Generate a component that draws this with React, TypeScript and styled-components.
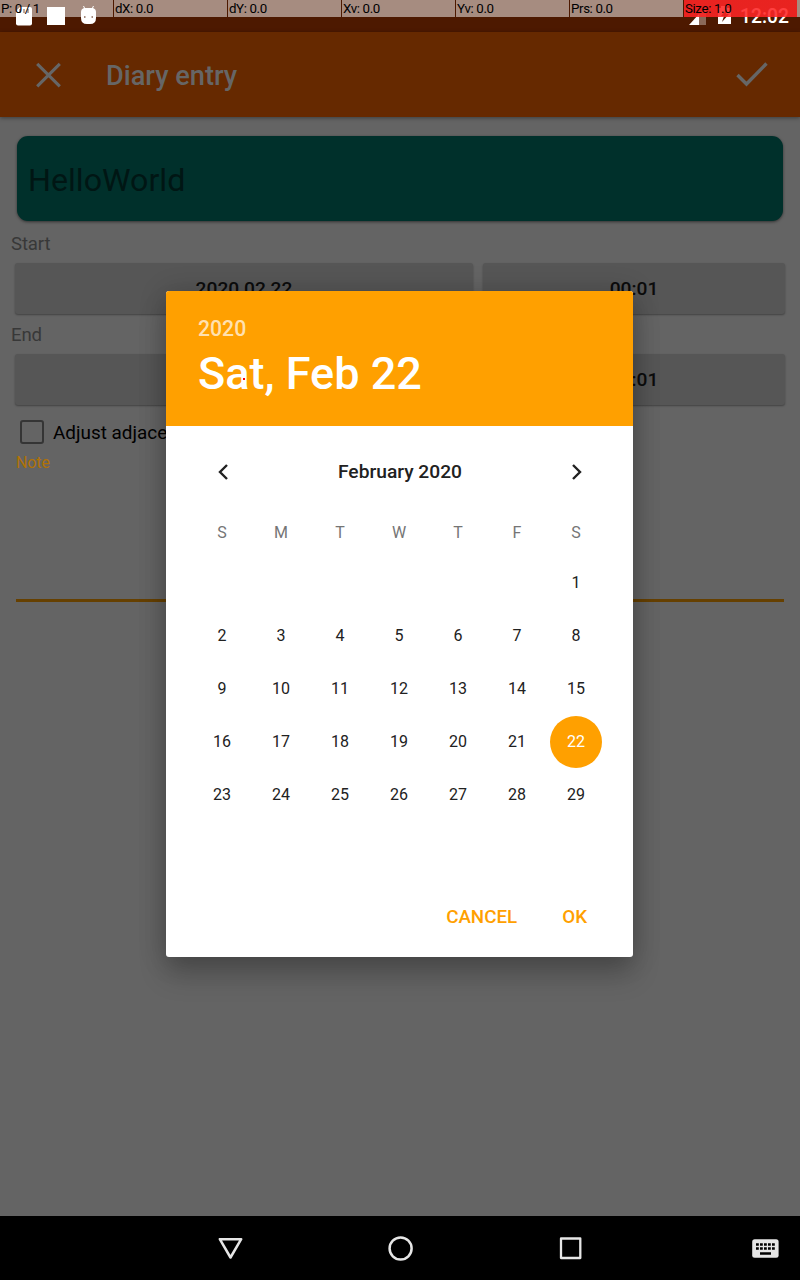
import React from "react";
import styled, { createGlobalStyle } from "styled-components";

const GlobalStyle = createGlobalStyle`
  * { box-sizing: border-box; }
  body { margin: 0; background: #646464; font-family: Roboto, "Liberation Sans", sans-serif; }
  svg { display: block; flex: none; }
`;

const Screen = styled.div`
  position: relative;
  width: 800px;
  height: 1280px;
  display: flex;
  flex-direction: column;
  overflow: hidden;
  background: #646464;
`;

const StatusBar = styled.div`
  height: 32px;
  display: flex;
  justify-content: space-between;
  background: #4d1900;
  color: #fff;
`;

const StatusGroup = styled.div`
  display: flex;
`;

const Clock = styled.span`
  width: 60px;
  padding-top: 1px;
  font-size: 19.3px;
  line-height: 32px;
  font-weight: 500;
  white-space: nowrap;
`;

const PointerBar = styled.div`
  position: absolute;
  top: 0;
  left: 0;
  width: 800px;
  height: 17px;
  display: flex;
`;

const PointerCell = styled.div<{ $active?: boolean }>`
  width: 113px;
  margin-right: 1px;
  padding-left: 1px;
  height: 17px;
  font-size: 13.3px;
  line-height: 17px;
  letter-spacing: -0.38px;
  white-space: nowrap;
  color: #000;
  background: ${(p) =>
    p.$active
      ? "linear-gradient(rgba(255,0,0,.75), rgba(255,0,0,.75)), rgba(255,255,255,.5)"
      : "rgba(255,255,255,.5)"};
`;

const PointerRest = styled.div`
  flex: 1;
  margin-left: -1px;
  background: rgba(255, 255, 255, 0.5);
`;

const Toolbar = styled.header`
  height: 85px;
  display: flex;
  align-items: center;
  padding: 0 32px;
  background: #662900;
  box-shadow: 0 1px 4px rgba(0, 0, 0, 0.4);
`;

const ToolbarTitle = styled.h1`
  flex: 1;
  margin: 3px 0 0 42px;
  font-size: 27.2px;
  font-weight: 500;
  line-height: 32px;
  color: #666;
`;

const Form = styled.main`
  flex: 1;
  padding: 19px 15px 0;
`;

const ActivityCard = styled.div`
  height: 85px;
  margin: 0 2px;
  padding: 3px 11px 0;
  display: flex;
  align-items: center;
  border-radius: 11px;
  background: #00302b;
  box-shadow: 0 1px 3px rgba(0, 0, 0, 0.5);
  font-size: 32.2px;
  color: #001614;
`;

const FieldLabel = styled.div<{ $height: number; $nudge: number }>`
  height: ${(p) => p.$height}px;
  margin-left: -4px;
  display: flex;
  align-items: center;
  padding-top: ${(p) => p.$nudge}px;
  font-size: 18.6px;
  letter-spacing: -0.15px;
  color: #383838;
`;

const FieldRow = styled.div`
  display: grid;
  grid-template-columns: 458px 302px;
  column-gap: 10px;
`;

const FieldButton = styled.button`
  height: 51px;
  padding: 1px 0 0;
  border: 0;
  border-radius: 3px;
  background: #565656;
  box-shadow: 0 1px 2px rgba(0, 0, 0, 0.35);
  font: 500 19.2px/50px Roboto, sans-serif;
  color: #0c0c0c;
`;

const CheckRow = styled.label`
  height: 54px;
  display: flex;
  align-items: center;
  padding-left: 5px;
  gap: 9px;
  font-size: 18.9px;
  color: #000;
`;

const CheckBox = styled.span`
  width: 24px;
  height: 24px;
  border: 2.5px solid #353535;
  border-radius: 3px;
`;

const NoteField = styled.div`
  height: 149px;
  margin: -6px 1px 0;
  border-bottom: 3px solid #664000;
  font-size: 16px;
  line-height: 19px;
  letter-spacing: -0.1px;
  color: #b07206;
`;

const Dialog = styled.section`
  position: absolute;
  left: 166px;
  top: 291px;
  width: 467px;
  height: 666px;
  display: flex;
  flex-direction: column;
  border-radius: 3px;
  background: #fff;
  box-shadow: 0 18px 28px rgba(0, 0, 0, 0.2), 0 2px 28px rgba(0, 0, 0, 0.2);
`;

const DialogHeader = styled.div`
  height: 135px;
  padding: 24px 32px 0;
  border-radius: 3px 3px 0 0;
  background: #ffa000;
`;

const Year = styled.div`
  padding-top: 1px;
  font-size: 21.2px;
  font-weight: 500;
  line-height: 26px;
  color: rgba(255, 255, 255, 0.7);
`;

const SelectedDate = styled.div`
  position: relative;
  margin-top: 5px;
  font-size: 45px;
  font-weight: 500;
  line-height: 53px;
  color: #fff;
`;

const PointerDot = styled.i`
  position: absolute;
  left: 45px;
  top: 31px;
  width: 2px;
  height: 2px;
  background: #f00;
`;

const MonthBar = styled.div`
  height: 90px;
  padding: 1px 43px 0 44px;
  display: flex;
  align-items: center;
  justify-content: space-between;
  font-size: 19.2px;
  font-weight: 500;
  color: #212121;
`;

const WeekdayRow = styled.div`
  display: grid;
  grid-template-columns: repeat(7, 59px);
  height: 32px;
  margin-left: 26.5px;
`;

const MonthGrid = styled.div`
  display: grid;
  grid-template-columns: repeat(7, 59px);
  grid-auto-rows: 53px;
  margin: 8px 0 0 26.5px;
`;

const Weekday = styled.span`
  display: grid;
  place-items: center;
  font-size: 16px;
  color: #757575;
`;

const Day = styled.span<{ $selected?: boolean }>`
  width: 52px;
  height: 52px;
  place-self: center;
  display: grid;
  place-items: center;
  border-radius: 50%;
  font-size: 16px;
  color: ${(p) => (p.$selected ? "#fff" : "#212121")};
  background: ${(p) => (p.$selected ? "#ffa000" : "transparent")};

  &:first-child {
    grid-column-start: 7;
  }
`;

const DialogActions = styled.div`
  margin-top: auto;
  height: 80px;
  padding-right: 46px;
  display: flex;
  justify-content: flex-end;
  align-items: center;
  gap: 45px;
`;

const ActionButton = styled.button`
  padding: 0;
  border: 0;
  background: none;
  font: 500 18.8px Roboto, sans-serif;
  color: #ffa000;
`;

const NavBar = styled.nav`
  height: 64px;
  padding: 0 20px 0 218px;
  display: flex;
  align-items: center;
  background: #000;
`;

const NavSlot = styled.span<{ $width: number }>`
  flex: none;
  width: ${(p) => p.$width}px;
`;

const readings = ["P: 0 / 1", "dX: 0.0", "dY: 0.0", "Xv: 0.0", "Yv: 0.0", "Prs: 0.0", "Size: 1.0"];
const weekdays = ["S", "M", "T", "W", "T", "F", "S"];
const days = Array.from({ length: 29 }, (_, i) => i + 1);

const Chevron = ({ d }: { d: string }) => (
  <svg width="26" height="26" viewBox="0 0 26 26" fill="none" stroke="#212121" strokeWidth="2.4">
    <path d={d} />
  </svg>
);

export default function App() {
  return (
    <Screen>
      <GlobalStyle />
      <StatusBar>
        <svg width="110" height="32" fill="#fff">
          <path d="M20 7h10a2 2 0 0 1 2 2v14.500a2 2 0 0 1-2 2H18a2 2 0 0 1-2-2V11z" />
          <path d="M20 9v4M24 9v4M28 9v4" stroke="#4d1900" strokeWidth="1.500" />
          <path d="M47 7h18v18H47z" />
          <path d="M81 12q0-3 3-4l-1-2h1l1 2h7l1-2h1l-1 2q3 1 3 4v6q0 6-6 6h-3q-6 0-6-6z" />
          <path d="M84 16h1.500v1.500H84zM91.500 16H93v1.500h-1.500z" fill="#4d1900" />
        </svg>
        <StatusGroup>
          <svg width="55" height="32" fill="#fff">
            <path d="M14 14l7-7v18h-7z" opacity=".35" />
            <path d="M14 14v11H4z" />
            <path d="M33 8h3V6h6v2h4v16H33z" />
            <path d="M42 9l-6 7h3l-2 6 7-8h-3z" fill="#4d1900" />
          </svg>
          <Clock>12:02</Clock>
        </StatusGroup>
      </StatusBar>
      <Toolbar>
        <svg width="32" height="32" viewBox="0 0 32 32" fill="none" stroke="#666" strokeWidth="3.1">
          <path d="M5.200 4.800l22.600 22.600M27.800 4.800L5.200 27.400" />
        </svg>
        <ToolbarTitle>Diary entry</ToolbarTitle>
        <svg width="32" height="32" viewBox="0 0 32 32" fill="none" stroke="#666" strokeWidth="3.4">
          <path d="M1.500 16l9 9L30.500 4.500" />
        </svg>
      </Toolbar>
      <Form>
        <ActivityCard>HelloWorld</ActivityCard>
        <FieldLabel $height={42} $nudge={3}>Start</FieldLabel>
        <FieldRow>
          <FieldButton>2020 02 22</FieldButton>
          <FieldButton>00:01</FieldButton>
        </FieldRow>
        <FieldLabel $height={40} $nudge={1}>End</FieldLabel>
        <FieldRow>
          <FieldButton />
          <FieldButton>00:01</FieldButton>
        </FieldRow>
        <CheckRow>
          <CheckBox />
          Adjust adjacent
        </CheckRow>
        <NoteField>Note</NoteField>
      </Form>
      <NavBar>
        <NavSlot $width={170}>
          <svg width="25" height="25" fill="none" stroke="#e6e6e6" strokeWidth="2.5" strokeLinejoin="round">
            <path d="M1.800 3.200h21.400L12.500 21.500z" />
          </svg>
        </NavSlot>
        <NavSlot $width={170}>
          <svg width="26" height="26" fill="none" stroke="#e6e6e6" strokeWidth="2.500">
            <circle cx="12.600" cy="13.500" r="11" />
          </svg>
        </NavSlot>
        <NavSlot $width={194}>
          <svg width="26" height="26" fill="none" stroke="#e6e6e6" strokeWidth="2.300" strokeLinejoin="round">
            <path d="M3 3.500h19.300V23H3z" />
          </svg>
        </NavSlot>
        <svg width="28" height="20" fill="#e6e6e6">
          <rect x="0.200" y="1.300" width="26.400" height="18.400" rx="2.500" />
          <path
            d="M4 6.500h19M4 10.500h19"
            stroke="#000"
            strokeWidth="2.600"
            strokeDasharray="2.800 1.200"
          />
          <path d="M8 15.500h11" stroke="#000" strokeWidth="2.500" />
        </svg>
      </NavBar>
      <Dialog>
        <DialogHeader>
          <Year>2020</Year>
          <SelectedDate>
            Sat, Feb 22
            <PointerDot />
          </SelectedDate>
        </DialogHeader>
        <MonthBar>
          <Chevron d="M17 6l-7 7 7 7" />
          February 2020
          <Chevron d="M9 6l7 7-7 7" />
        </MonthBar>
        <WeekdayRow>
          {weekdays.map((d, i) => (
            <Weekday key={i}>{d}</Weekday>
          ))}
        </WeekdayRow>
        <MonthGrid>
          {days.map((d) => (
            <Day key={d} $selected={d === 22}>
              {d}
            </Day>
          ))}
        </MonthGrid>
        <DialogActions>
          <ActionButton>CANCEL</ActionButton>
          <ActionButton>OK</ActionButton>
        </DialogActions>
      </Dialog>
      <PointerBar>
        {readings.map((r, i) => (
          <PointerCell key={r} $active={i === 6}>
            {r}
          </PointerCell>
        ))}
        <PointerRest />
      </PointerBar>
    </Screen>
  );
}
